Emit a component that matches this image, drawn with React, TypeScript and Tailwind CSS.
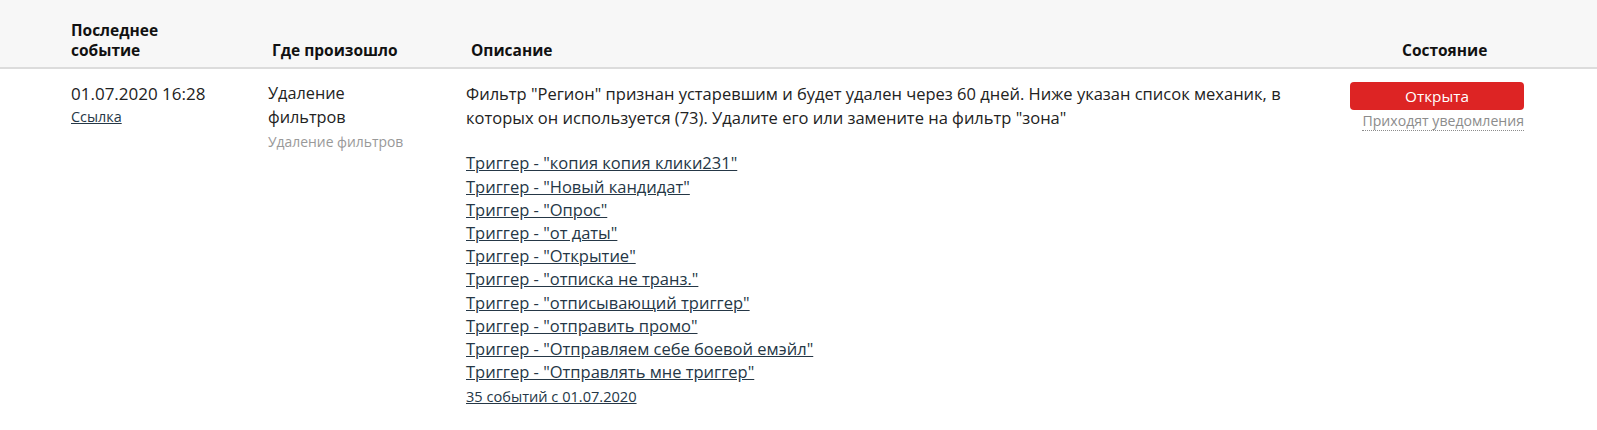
import React from "react";

const links = [
  "Триггер - \"копия копия клики231\"",
  "Триггер - \"Новый кандидат\"",
  "Триггер - \"Опрос\"",
  "Триггер - \"от даты\"",
  "Триггер - \"Открытие\"",
  "Триггер - \"отписка не транз.\"",
  "Триггер - \"отписывающий триггер\"",
  "Триггер - \"отправить промо\"",
  "Триггер - \"Отправляем себе боевой емэйл\"",
  "Триггер - \"Отправлять мне триггер\"",
];

export default function App() {
  return (
    <div
      className="w-[1597px] h-[430px] bg-white text-[#222]"
      style={{ fontFamily: '"Open Sans", "Noto Sans", sans-serif' }}
    >
      <div className="grid grid-cols-[201px_199px_879px_200px] pl-[71px] bg-[#f7f7f7] border-b-2 border-[#dcdcdc] h-[69px] items-end pb-[7px] text-[15.5px] leading-[20px] font-bold text-[#111]">
        <div>
          Последнее
          <br />
          событие
        </div>
        <div>Где произошло</div>
        <div>Описание</div>
        <div className="pl-[52px]">Состояние</div>
      </div>
      <div className="grid grid-cols-[197px_198px_884px_174px] pl-[71px] pt-[13px]">
        <div className="flex flex-col items-start">
          <span className="text-[17px] leading-[24px]">01.07.2020 16:28</span>
          <a href="#" className="mt-[1px] text-[14.4px] leading-[20px] underline text-[#253746]">
            Ссылка
          </a>
        </div>
        <div className="flex flex-col text-[16.3px] leading-[23.5px]">
          <span>Удаление</span>
          <span>фильтров</span>
          <span className="mt-[3px] text-[13.9px] leading-[20px] text-[#999]">Удаление фильтров</span>
        </div>
        <div className="pr-[40px] text-[16.5px]">
          <p className="leading-[24.2px]">
            Фильтр "Регион" признан устаревшим и будет удален через 60 дней. Ниже указан список механик, в
            которых он используется (73). Удалите его или замените на фильтр "зона"
          </p>
          <div className="mt-[21px] flex flex-col items-start leading-[23.2px]">
            {links.map((l) => (
              <a key={l} href="#" className="underline text-[#253746]">
                {l}
              </a>
            ))}
            <a href="#" className="underline text-[#253746] text-[14.6px] leading-[27px]">
              35 событий с 01.07.2020
            </a>
          </div>
        </div>
        <div className="flex flex-col items-end">
          <button className="w-[174px] h-[28px] rounded-[4px] bg-[#dd2424] text-white text-[15.3px] leading-[28px]">
            Открыта
          </button>
          <span className="mt-[2px] text-[14.1px] leading-[18px] text-[#8c8c8c] border-b border-dotted border-[#8c8c8c]">
            Приходят уведомления
          </span>
        </div>
      </div>
    </div>
  );
}
